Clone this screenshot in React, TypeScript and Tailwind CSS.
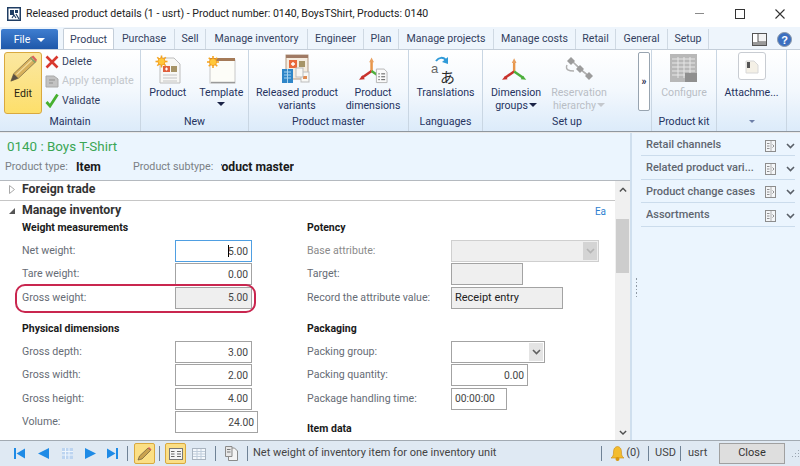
import React from "react";

const Sun = ({ x, y }: { x: number; y: number }) => (
  <g>
    {[0, 45, 90, 135].map((a) => (
      <rect key={a} x={x - 6} y={y - 0.8} width={12} height={1.6} fill="#f5a623" transform={`rotate(${a} ${x} ${y})`} />
    ))}
    <circle cx={x} cy={y} r={3.6} fill="#ffc83a" stroke="#f08a10" strokeWidth={0.6} />
  </g>
);

const Axes = ({ w, h, doc }: { w: number; h: number; doc?: boolean }) => (
  <svg width={w} height={h} viewBox="0 0 30 28">
    <path d="M13 15 L13 4" stroke="#e8964a" strokeWidth="2.6" />
    <path d="M13 1 L10.5 6 H15.5 Z" fill="#e8a060" />
    <path d="M13 15 L3 22" stroke="#c8322c" strokeWidth="2.6" />
    <path d="M0 24 L6 23.5 L3.5 19.5 Z" fill="#c8322c" />
    <path d="M13 15 L23 22" stroke="#4caf3c" strokeWidth="2.6" />
    <path d="M26 24 L20 23.5 L22.5 19.5 Z" fill="#4caf3c" />
    {doc && (
      <g>
        <path d="M18 13 H26 L29 16 V27 H18 Z" fill="#fafafa" stroke="#b5b5b5" />
        <path d="M20 18 H21.5 M23 18 H27 M20 21 H21.5 M23 21 H27 M20 24 H21.5 M23 24 H27" stroke="#555" strokeWidth="1" />
      </g>
    )}
  </svg>
);

const RibbonLabel = ({ children, muted }: { children: React.ReactNode; muted?: boolean }) => (
  <span className={`block whitespace-nowrap text-center text-[10.6px] leading-[13px] ${muted ? "text-[#b9bec5]" : "text-[#25335f]"}`}>{children}</span>
);

const LargeButton = ({ icon, lines, width, muted, arrow }: { icon: React.ReactNode; lines: React.ReactNode[]; width: string; muted?: boolean; arrow?: boolean }) => (
  <div className={`flex flex-col items-center ${width}`}>
    <div className="flex h-[32px] items-end justify-center">{icon}</div>
    <div className="mt-[2px]">
      {lines.map((l, i) => (
        <RibbonLabel key={i} muted={muted}>{l}</RibbonLabel>
      ))}
    </div>
    {arrow && <span className="mt-[3px] h-0 w-0 border-x-[4px] border-t-[4px] border-x-transparent border-t-[#1b2447]" />}
  </div>
);

const Caret = ({ muted }: { muted?: boolean }) => (
  <span className={`ml-[1px] inline-block h-0 w-0 -translate-y-[2px] border-x-[4px] border-t-[4px] border-x-transparent ${muted ? "border-t-[#c4c8cd]" : "border-t-[#1b2447]"}`} />
);

const Group = ({ label, width, children }: { label: React.ReactNode; width: string; children: React.ReactNode }) => (
  <div className={`flex h-full shrink-0 flex-col border-r border-[#c9d6e3] ${width}`}>
    <div className="flex h-[64px] pt-[2px]">{children}</div>
    <div className="flex h-[15px] items-center justify-center text-[10.6px] text-[#25335f]">{label}</div>
  </div>
);

const Tab = ({ label, width, active }: { label: string; width: string; active?: boolean }) =>
  active ? (
    <div className={`mb-[-1px] flex h-[22px] items-center justify-center rounded-t-[2px] border border-b-0 border-[#c4ced9] bg-white text-[10.6px] text-[#33415f] ${width}`}>{label}</div>
  ) : (
    <div className={`flex h-[20px] items-center justify-center border-r border-[#cfd9e3] text-[10.6px] text-[#33415f] ${width}`}>{label}</div>
  );

const Field = ({ label, children, muted, wide }: { label: string; children: React.ReactNode; muted?: boolean; wide?: boolean }) => (
  <div className="flex h-[23.33px] items-start">
    <span className={`shrink-0 whitespace-nowrap pt-[4px] text-[10.6px] leading-[14px] ${wide ? "w-[153px]" : "w-[144px]"} ${muted ? "text-[#8a8a8a]" : "text-[#666c75]"}`}>{label}</span>
    {children}
  </div>
);

const Input = ({ value, width, bg, focus, left, dark }: { value?: string; width: string; bg?: string; focus?: boolean; left?: boolean; dark?: boolean }) => (
  <div
    className={`flex h-[22px] shrink-0 items-center border-[1.5px] px-[3px] pt-[1px] ${dark ? "text-[11px]" : "text-[10.3px]"} ${left ? "justify-start" : "justify-end"} ${width} ${bg ?? "bg-white"} ${focus ? "border-[#4f9fe2]" : "border-[#a3a3a3]"} ${dark ? "text-[#222]" : "text-[#444]"}`}
  >
    {focus ? (
      <span className="relative">
        <span className="absolute left-[0px] top-[1px] h-[12px] w-[1px] bg-black" />
        {value}
      </span>
    ) : (
      value
    )}
  </div>
);

const Chevron = ({ color = "#555", size = 9 }: { color?: string; size?: number }) => (
  <svg width={size} height={size * 0.67} viewBox="0 0 9 6">
    <path d="M1 1 L4.5 4.5 L8 1" fill="none" stroke={color} strokeWidth="1.6" />
  </svg>
);

const Select = ({ width, disabled }: { width: string; disabled?: boolean }) => (
  <div className={`flex h-[22px] shrink-0 items-stretch justify-end border-[1.5px] p-[1px] ${width} ${disabled ? "border-[#cfcfcf] bg-[#efefef]" : "border-[#a3a3a3] bg-white"}`}>
    <div className={`flex w-[14px] items-center justify-center ${disabled ? "bg-[#d4d4d4]" : "bg-[#e4e4e4]"}`}>
      <Chevron color={disabled ? "#b4b4b4" : "#606060"} />
    </div>
  </div>
);

const SectionHead = ({ children, className = "" }: { children: React.ReactNode; className?: string }) => (
  <div className={`h-[16px] whitespace-nowrap text-[10.5px] font-bold leading-[16px] text-[#1a1a1a] ${className}`}>{children}</div>
);

const FactBox = ({ label }: { label: string }) => (
  <div className="flex h-[23.4px] items-center border-b-[1.5px] border-[#cbdcec] pl-[5px]">
    <span className="w-[119px] shrink-0 truncate pt-[2px] text-[11px] font-medium text-[#5f6670]">{label}</span>
    <svg width="11" height="12" viewBox="0 0 11 12" className="mt-[3px]">
      <rect x="0.5" y="0.5" width="10" height="11" fill="#f4f6f8" stroke="#8d8d8d" />
      <path d="M6 1 V11" stroke="#b0b0b0" />
      <path d="M2 3.5 H4.5 M2 6 H4.5 M2 8.5 H4.5 M7.5 4.5 L9 6 L7.5 7.5" stroke="#777" strokeWidth="0.8" fill="none" />
    </svg>
    <span className="ml-[10px] mt-[3px] flex"><Chevron color="#5a6068" /></span>
  </div>
);

const Sep = ({ className = "" }: { className?: string }) => <span className={`h-[15px] w-[1px] shrink-0 bg-[#6f8296] ${className}`} />;

const Tri = ({ flip, bar }: { flip?: boolean; bar?: boolean }) => (
  <svg width="11" height="11" viewBox="0 0 11 11" className={flip ? "-scale-x-100" : ""}>
    <path d={bar ? "M0 0.5 L8.5 5.5 L0 10.5 Z" : "M0 0 L11 5.5 L0 11 Z"} fill="#1f8be6" />
    {bar && <rect x="9" y="0" width="2" height="11" fill="#1f8be6" />}
  </svg>
);

export default function App() {
  return (
    <div className="flex h-[466px] w-[800px] flex-col overflow-hidden bg-white font-['Roboto','Open_Sans',sans-serif]">
      {/* Title bar */}
      <div className="flex h-[27px] shrink-0 items-center pl-[7px]">
        <svg width="14" height="14" viewBox="0 0 14 14">
          <rect width="14" height="14" fill="#1f3d63" />
          <rect x="1.5" y="1.5" width="11" height="11" fill="#fff" />
          <path d="M3 3 H7 V8 H3 Z M8 3 H11 V6 H8 Z" fill="#1f3d63" />
          <path d="M5 11 L7 8 L9 11 M9 7 L12 12" stroke="#1f3d63" strokeWidth="1.2" fill="none" />
        </svg>
        <span className="ml-[5px] whitespace-nowrap text-[10.56px] text-[#222]">Released product details (1 - usrt) - Product number: 0140, BoysTShirt, Products: 0140</span>
        <div className="ml-auto flex items-center">
          <span className="h-[1.5px] w-[9px] bg-[#8a8a8a]" />
          <span className="ml-[31px] h-[10px] w-[10px] border-[1.5px] border-[#333]" />
          <svg width="10" height="10" viewBox="0 0 10 10" className="ml-[30px] mr-[15px]">
            <path d="M0.5 0.5 L9.5 9.5 M9.5 0.5 L0.5 9.5" stroke="#333" strokeWidth="1.1" />
          </svg>
        </div>
      </div>

      {/* Tabs */}
      <div className="flex h-[22px] shrink-0 items-end bg-[#eef5fc]">
        <div className="mb-[-1px] ml-[1px] flex h-[21px] w-[57px] items-center justify-center gap-[7px] rounded-t-[2px] bg-gradient-to-b from-[#3f7ed0] to-[#1d56a8] text-[10.6px] text-white">
          File
          <span className="h-0 w-0 border-x-[4px] border-t-[4px] border-x-transparent border-t-white" />
        </div>
        <div className="w-[5px]" />
        <Tab label="Product" width="w-[51px]" active />
        <Tab label="Purchase" width="w-[61px]" />
        <Tab label="Sell" width="w-[31px]" />
        <Tab label="Manage inventory" width="w-[102px]" />
        <Tab label="Engineer" width="w-[56px]" />
        <Tab label="Plan" width="w-[35px]" />
        <Tab label="Manage projects" width="w-[95px]" />
        <Tab label="Manage costs" width="w-[82px]" />
        <Tab label="Retail" width="w-[40px]" />
        <Tab label="General" width="w-[52px]" />
        <Tab label="Setup" width="w-[41px]" />
        <div className="ml-auto flex h-[20px] items-center pr-[8px]">
          <svg width="15" height="13" viewBox="0 0 15 13">
            <rect x="0.5" y="0.5" width="14" height="12" fill="#f3f3f3" stroke="#555" />
            <rect x="1" y="1" width="5" height="8" fill="#fff" />
            <path d="M6 1 V9 H14" stroke="#555" fill="none" />
            <rect x="1" y="9" width="13" height="3" fill="#9a9a9a" />
          </svg>
          <svg width="15" height="15" viewBox="0 0 15 15" className="ml-[10px]">
            <circle cx="7.5" cy="7.5" r="7" fill="#3b6fc0" stroke="#8b98a8" />
            <text x="7.5" y="11.5" textAnchor="middle" fontSize="11" fontWeight="700" fill="#fff" fontFamily="Liberation Sans">?</text>
          </svg>
        </div>
      </div>

      {/* Ribbon */}
      <div className="flex h-[82px] shrink-0 border-t border-[#c4ced9] bg-gradient-to-b from-white via-[#f3f8fd] to-[#dcebfa]">
        <Group label="Maintain" width="w-[141px]">
          <div className="ml-[4px] flex h-[62px] w-[38px] flex-col items-center rounded-[3px] border border-[#d9a93f] bg-gradient-to-b from-[#fbe7a0] to-[#fddf6a]">
            <svg width="30" height="28" viewBox="0 0 30 30" className="mt-[2px]">
              <path d="M2 28 L5 20 L24 2 L29 7 L10 25 Z" fill="#d7b05c" stroke="#7b6a45" strokeWidth="0.8" />
              <path d="M5 20 L10 25 L2 28 Z" fill="#5c5244" />
              <path d="M8 21 L26 4" stroke="#f2dc9e" strokeWidth="1.4" />
              <path d="M24 2 L26 0.5 L30 5 L29 7 Z" fill="#d9605c" />
              <path d="M23 3 L28 8" stroke="#7fa06a" strokeWidth="1.6" />
            </svg>
            <span className="mt-[4px] text-[10.6px] leading-[13px] text-[#2a2410]">Edit</span>
          </div>
          <div className="ml-[3px] flex flex-col">
            <div className="flex h-[19.5px] items-center">
              <svg width="14" height="14" viewBox="0 0 14 14">
                <path d="M1.5 1.5 L12.5 12.5 M12.5 1.5 L1.5 12.5" stroke="#d8382e" strokeWidth="2.6" />
              </svg>
              <span className="ml-[3px] text-[10.6px] text-[#33415f]">Delete</span>
            </div>
            <div className="flex h-[19.5px] items-center">
              <svg width="14" height="14" viewBox="0 0 14 14">
                <path d="M1 2 H9 L13 5 V13 H1 Z" fill="#c2c2c2" stroke="#a9a9a9" />
                <path d="M4 6 H10 M4 9 H8" stroke="#8f8f8f" strokeWidth="1.2" />
              </svg>
              <span className="ml-[3px] whitespace-nowrap text-[10.75px] text-[#c3c7cc]">Apply template</span>
            </div>
            <div className="flex h-[19.5px] items-center">
              <svg width="14" height="15" viewBox="0 0 14 15">
                <path d="M1.5 9 L5 13 L12.5 1.5" fill="none" stroke="#47b02f" strokeWidth="2.8" />
              </svg>
              <span className="ml-[3px] text-[10.6px] text-[#33415f]">Validate</span>
            </div>
          </div>
        </Group>

        <Group label="New" width="w-[108px]">
          <LargeButton
            width="w-[54px]"
            lines={["Product"]}
            icon={
              <svg width="26" height="29" viewBox="0 0 26 29">
                <path d="M5 3 H19 L25 9 V28 H5 Z" fill="#f8f8f5" stroke="#bdbdbd" />
                <rect x="8" y="11" width="7" height="6" fill="#e0603c" />
                <path d="M10 14 H13 M11.5 12.5 V15.5" stroke="#fff" strokeWidth="1.2" />
                <rect x="16" y="11" width="6" height="6" fill="#a79466" />
                <path d="M8 20 H22 M8 23 H22 M8 26 H22" stroke="#c4c4c4" />
                <Sun x={6.5} y={6.5} />
              </svg>
            }
          />
          <LargeButton
            width="w-[54px]"
            lines={["Template"]}
            arrow
            icon={
              <svg width="30" height="29" viewBox="0 0 30 29">
                <rect x="4" y="5" width="25" height="23" fill="#fdfdf8" stroke="#c8c8c8" />
                <rect x="4" y="3" width="25" height="3" fill="#a47a58" />
                <path d="M5 27.5 H29" stroke="#9a9a9a" strokeWidth="1.4" />
                <Sun x={7} y={7} />
              </svg>
            }
          />
        </Group>

        <Group label="Product master" width="w-[160px]">
          <LargeButton
            width="w-[96px]"
            lines={["Released product", "variants"]}
            icon={
              <svg width="30" height="30" viewBox="0 0 30 30">
                <rect x="4" y="1" width="22" height="24" fill="#f5ecdf" stroke="#b39a82" />
                <rect x="4" y="1" width="22" height="3" fill="#a07a64" />
                <rect x="7" y="6" width="8" height="8" fill="#e8693c" />
                <path d="M9 10 H13 M11 8 V12" stroke="#fff" strokeWidth="1.4" />
                <rect x="17" y="7" width="6" height="6" fill="#a79466" />
                <rect x="0" y="15" width="11" height="14" fill="#2f86c8" />
                <path d="M2 18 H9 M2 21 H9 M2 24 H9 M5.5 15 V29" stroke="#a9d4f0" />
                <rect x="19" y="18" width="8" height="10" fill="#f8f8f5" stroke="#bdbdbd" />
                <rect x="21" y="22" width="4" height="3" fill="#e08a50" />
                <rect x="14" y="14" width="7" height="9" fill="#f8f8f5" stroke="#bdbdbd" />
              </svg>
            }
          />
          <LargeButton width="w-[56px]" lines={["Product", "dimensions"]} icon={<Axes w={29} h={28} doc />} />
        </Group>

        <Group label="Languages" width="w-[74px]">
          <LargeButton
            width="w-[73px]"
            lines={["Translations"]}
            icon={
              <svg width="30" height="29" viewBox="0 0 30 29">
                <path d="M5 6 C8 2 12 2 15 5" fill="none" stroke="#2f9ad8" strokeWidth="2" />
                <path d="M17 9 L17 2 L11 7 Z" fill="#2f9ad8" />
                <text x="0" y="18" fontSize="13" fill="#666" fontFamily="Liberation Sans">a</text>
                <text x="9" y="28" fontSize="15" fill="#2a2a2a" fontFamily="Noto Sans CJK JP">あ</text>
              </svg>
            }
          />
        </Group>

        <Group label="Set up" width="w-[169px]">
          <LargeButton width="w-[66px]" lines={["Dimension", <>groups<Caret /></>]} icon={<Axes w={28} h={27} />} />
          <LargeButton
            width="w-[60px]"
            muted
            lines={["Reservation", <>hierarchy<Caret muted /></>]}
            icon={
              <svg width="30" height="28" viewBox="0 0 30 28">
                <path d="M8 5 L17 14 L26 21" stroke="#b0b0b0" strokeWidth="1.6" />
                <path d="M7 1 L11 5 L7 9 L3 5 Z M16 9 L20 13 L16 17 L12 13 Z M25 16 L29 20 L25 24 L21 20 Z" fill="#9c9c9c" />
                <path d="M3 9 C1 14 5 15 10 15" fill="none" stroke="#b0b0b0" strokeWidth="1.4" />
              </svg>
            }
          />
          <div className="ml-[29px] flex h-[59px] w-[12px] items-center justify-center rounded-[2px] border border-[#98a4b0] bg-white text-[10px] font-bold leading-none text-[#1b2447]">»</div>
        </Group>

        <Group label="Product kit" width="w-[65px]">
          <LargeButton
            width="w-[64px]"
            muted
            lines={["Configure"]}
            icon={
              <svg width="28" height="30" viewBox="0 0 28 30">
                <rect x="0" y="0" width="27" height="28" fill="#b8b8b8" />
                <path d="M2 5 H25 M2 9 H25 M2 13 H25 M2 17 H25 M2 21 H25 M8 3 V24 M14 3 V24 M20 3 V24" stroke="#e6e6e6" />
                <rect x="15" y="19" width="12" height="9" fill="#8f8f8f" />
              </svg>
            }
          />
        </Group>

        <Group label={<span className="h-0 w-0 border-x-[3px] border-t-[3px] border-x-transparent border-t-[#6d7fa8]" />} width="w-[70px]">
          <LargeButton
            width="w-[69px]"
            lines={["Attachme..."]}
            icon={
              <div className="mb-[4px] flex h-[28px] w-[28px] items-center justify-center rounded-[3px] border border-[#c8ccd2] bg-white">
                <svg width="14" height="15" viewBox="0 0 14 15">
                  <path d="M1 2 H9 L13 6 V14 H1 Z" fill="#f4f0e6" stroke="#d8d8d8" />
                  <rect x="2" y="3" width="3" height="6" fill="#555" />
                </svg>
              </div>
            }
          />
        </Group>
      </div>
      <div className="h-[2px] shrink-0 border-t border-[#8f979f] bg-[#e9e9e9]" />

      {/* Main */}
      <div className="relative flex min-h-0 flex-1">
        <div className="flex w-[630px] shrink-0 flex-col">
          {/* Header */}
          <div className="h-[48px] shrink-0 border-b-[1.5px] border-[#b4b9bf] bg-[#ebf5fe] pl-[7px]">
            <div className="pt-[4px] text-[13.4px] leading-[20px] text-[#3aa655]">0140 : Boys T-Shirt</div>
            <div className="mt-[1px] flex h-[18px] items-center text-[10.7px]">
              <span className="-ml-[2px] w-[71px] text-[#7a7f85]">Product type:</span>
              <span className="w-[57px] text-[12.2px] font-bold text-[#1a1a1a]">Item</span>
              <span className="w-[88px] whitespace-nowrap text-[#7a7f85]">Product subtype:</span>
              <span className="flex w-[73px] justify-end overflow-hidden whitespace-nowrap text-[12.2px] font-bold text-[#1a1a1a]">Product master</span>
            </div>
          </div>
          <div className="flex min-h-0 flex-1">
            {/* Form */}
            <div className="min-w-0 flex-1 overflow-hidden">
              <div className="flex h-[20px] items-center border-b-[1.5px] border-[#c6c6c6] pb-[3px] pl-[9px]">
                <svg width="6" height="9" viewBox="0 0 6 9"><path d="M0.5 0.5 L5.5 4.5 L0.5 8.5 Z" fill="#fff" stroke="#a8a8a8" /></svg>
                <span className="ml-[7px] text-[12.3px] font-bold text-[#333]">Foreign trade</span>
              </div>
              <div className="flex h-[19px] items-center justify-between pl-[9px] pr-[9px]">
                <div className="flex items-center">
                  <svg width="6" height="6" viewBox="0 0 6 6"><path d="M6 0 V6 H0 Z" fill="#555" /></svg>
                  <span className="ml-[7px] text-[12.3px] font-bold text-[#333]">Manage inventory</span>
                </div>
                <span className="pt-[2px] text-[10px] text-[#2f7fd0]">Ea</span>
              </div>
              <div className="flex">
                <div className="w-[307px] shrink-0 pl-[22px]">
                  <SectionHead className="mb-[4px]">Weight measurements</SectionHead>
                  <Field wide label="Net weight:"><Input value="5.00" width="w-[77px]" focus /></Field>
                  <Field wide label="Tare weight:"><Input value="0.00" width="w-[77px]" /></Field>
                  <Field wide label="Gross weight:"><Input value="5.00" width="w-[77px]" bg="bg-[#efefef]" /></Field>
                  <SectionHead className="mb-[4px] mt-[11px]">Physical dimensions</SectionHead>
                  <Field wide label="Gross depth:"><Input value="3.00" width="w-[77px]" /></Field>
                  <Field wide label="Gross width:"><Input value="2.00" width="w-[77px]" /></Field>
                  <Field wide label="Gross height:"><Input value="4.00" width="w-[77px]" /></Field>
                  <Field wide label="Volume:"><Input value="24.00" width="w-[83px]" /></Field>
                </div>
                <div className="min-w-0 flex-1">
                  <SectionHead className="mb-[4px]">Potency</SectionHead>
                  <Field muted label="Base attribute:"><Select width="w-[148px]" disabled /></Field>
                  <Field label="Target:"><Input width="w-[72px]" bg="bg-[#efefef]" /></Field>
                  <Field label="Record the attribute value:"><Input value="Receipt entry" left dark width="w-[112px]" bg="bg-[#efefef]" /></Field>
                  <SectionHead className="mb-[4px] mt-[11px]">Packaging</SectionHead>
                  <Field label="Packing group:"><Select width="w-[94px]" /></Field>
                  <Field label="Packing quantity:"><Input value="0.00" width="w-[77px]" /></Field>
                  <Field label="Package handling time:"><Input value="00:00:00" left width="w-[56px]" /></Field>
                  <SectionHead className="mt-[10px]">Item data</SectionHead>
                </div>
              </div>
            </div>
            {/* Scrollbar */}
            <div className="relative flex w-[15px] shrink-0 flex-col items-center bg-[#f0f0f0]">
              <div className="flex h-[38px] w-full items-start justify-center pt-[6px]">
                <span className="rotate-180"><Chevron color="#505050" size={8} /></span>
              </div>
              <div className="h-[54px] w-[13px] bg-[#cdcdcd]" />
              <div className="flex-1" />
              <div className="pb-[5px]"><Chevron color="#505050" size={8} /></div>
            </div>
          </div>
        </div>

        {/* Right panel */}
        <div className="flex min-w-0 flex-1 border-l-2 border-[#cfdfee] bg-[#ebf5fe]">
          <div className="flex w-[9px] shrink-0 flex-col items-center pt-[145px]">
            <span className="flex flex-col gap-[2px]">
              {[0, 1, 2, 3, 4, 5].map((i) => (
                <span key={i} className="h-[1.5px] w-[1.5px] bg-[#8f9aa5]" />
              ))}
            </span>
          </div>
          <div className="w-[154px] shrink-0">
            <FactBox label="Retail channels" />
            <FactBox label="Related product vari..." />
            <FactBox label="Product change cases" />
            <FactBox label="Assortments" />
          </div>
        </div>

        {/* Highlight ring over the Gross weight row */}
        <div className="pointer-events-none absolute left-[15px] top-[151px] h-[29px] w-[241px] rounded-[10px] border-2 border-[#c9264f]" />
      </div>

      {/* Status bar */}
      <div className="flex h-[26px] shrink-0 items-center border-t-[1.5px] border-[#a2aab2] bg-[#dfe9f3] text-[11px] text-[#444]">
        <span className="ml-[14px] flex"><Tri flip bar /></span>
        <span className="ml-[13px] flex"><Tri flip /></span>
        <svg width="11" height="11" viewBox="0 0 11 11" className="ml-[13px]">
          <rect width="11" height="11" fill="#bcd4f0" />
          <path d="M0 3.5 H11 M0 7 H11 M3.5 0 V11 M7 0 V11" stroke="#eef5fc" />
        </svg>
        <span className="ml-[12px] flex"><Tri /></span>
        <span className="ml-[11px] flex"><Tri bar /></span>
        <Sep className="ml-[9px]" />
        <div className="ml-[6px] flex h-[21px] w-[21px] items-center justify-center rounded-[2px] border border-[#d9a93f] bg-[#fbdf85]">
          <svg width="15" height="15" viewBox="0 0 15 15">
            <path d="M1 14 L2.5 10 L11 2 L13.5 4.5 L5 13 Z" fill="#c9a24f" stroke="#6b5a3a" strokeWidth="0.7" />
            <path d="M11 2 L12 1 L14.5 3.5 L13.5 4.5 Z" fill="#d9605c" />
          </svg>
        </div>
        <Sep className="ml-[4px]" />
        <div className="ml-[5px] flex h-[21px] w-[21px] items-center justify-center rounded-[2px] border border-[#d9a93f] bg-[#fbdf85]">
          <svg width="14" height="12" viewBox="0 0 14 12">
            <rect x="0.5" y="0.5" width="13" height="11" fill="#f6f6f6" stroke="#777" />
            <path d="M2 3.5 H5.5 M2 6 H5.5 M2 8.5 H5.5 M8 3.5 H12 M8 6 H12 M8 8.5 H12" stroke="#666" />
          </svg>
        </div>
        <svg width="14" height="12" viewBox="0 0 14 12" className="ml-[6px]">
          <rect x="0.5" y="0.5" width="13" height="11" fill="#f4f8fc" stroke="#a9b4c0" />
          <path d="M1 3.5 H13 M1 6 H13 M1 8.5 H13 M5 1 V11 M9 1 V11" stroke="#c0cddb" />
        </svg>
        <Sep className="ml-[9px]" />
        <svg width="13" height="15" viewBox="0 0 13 15" className="ml-[9px]">
          <path d="M3.5 2 H9.5 L12.5 5 V14.5 H3.5 Z" fill="#f4f4f4" stroke="#8a8a8a" />
          <path d="M0.5 0.5 H7 V10.5 H0.5 Z" fill="#e6e6e6" stroke="#8a8a8a" />
          <path d="M2 3.5 H5.5 M2 6 H5.5" stroke="#777" />
        </svg>
        <Sep className="ml-[9px]" />
        <span className="ml-[5px] whitespace-nowrap">Net weight of inventory item for one inventory unit</span>
        <div className="ml-auto flex items-center">
          <Sep className="mr-[8px]" />
          <svg width="15" height="15" viewBox="0 0 15 15">
            <path d="M7.5 0.5 C4 1 3.5 4 3.5 7 C3.5 9.5 2.5 11 1 12 H14 C12.5 11 11.5 9.5 11.5 7 C11.5 4 11 1 7.5 0.5 Z" fill="#f3bc2e" stroke="#c98a14" strokeWidth="0.6" />
            <circle cx="7.5" cy="13" r="2" fill="#d9960f" />
          </svg>
          <span className="ml-[1px]">(0)</span>
          <Sep className="ml-[8px]" />
          <span className="ml-[6px]">USD</span>
          <Sep className="ml-[4px]" />
          <span className="ml-[7px] w-[31px]">usrt</span>
          <div className="flex h-[21px] w-[66px] items-center justify-center border-[1.5px] border-[#a0a0a0] bg-[#dedede] text-[11px] text-[#333]">Close</div>
          <svg width="15" height="12" viewBox="0 0 15 12">
            <path d="M13 2 h1 v1 h-1 Z M10 5 h1 v1 h-1 Z M13 5 h1 v1 h-1 Z M7 8 h1 v1 h-1 Z M10 8 h1 v1 h-1 Z M13 8 h1 v1 h-1 Z" fill="#9aa5b0" />
          </svg>
        </div>
      </div>
    </div>
  );
}
